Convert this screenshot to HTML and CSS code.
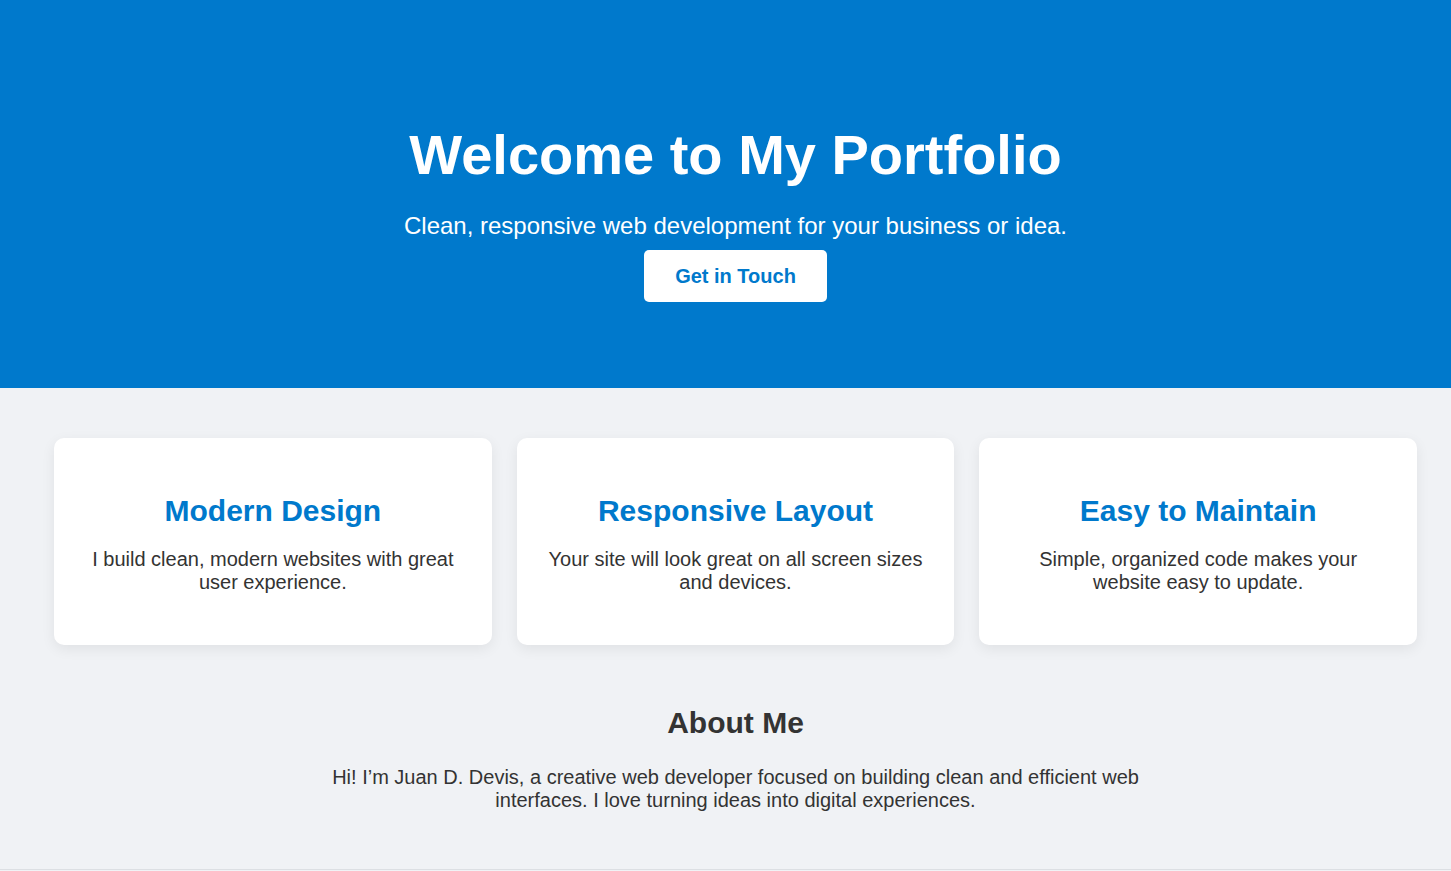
FILE: index.html
```html
<!DOCTYPE html>
<html lang="en">
<head>
<meta charset="utf-8">
<title>My Portfolio</title>
<link rel="stylesheet" href="styles.css">
</head>
<body>
<div class="page">
  <header class="hero">
    <h1 class="hero-title">Welcome to My Portfolio</h1>
    <p class="hero-sub">Clean, responsive web development for your business or idea.</p>
    <a class="hero-btn" href="#contact">Get in Touch</a>
  </header>

  <section class="features">
    <div class="card">
      <h2 class="card-title">Modern Design</h2>
      <p class="card-text">I build clean, modern websites with great user experience.</p>
    </div>
    <div class="card">
      <h2 class="card-title">Responsive Layout</h2>
      <p class="card-text">Your site will look great on all screen sizes and devices.</p>
    </div>
    <div class="card">
      <h2 class="card-title">Easy to Maintain</h2>
      <p class="card-text">Simple, organized code makes your website easy to update.</p>
    </div>
  </section>

  <section class="about">
    <h2 class="about-title">About Me</h2>
    <p class="about-text">Hi! I’m Juan D. Devis, a creative web developer focused on building clean and efficient web interfaces. I love turning ideas into digital experiences.</p>
  </section>

  <footer class="footer" id="contact"></footer>
</div>
</body>
</html>
```

FILE: styles.css
```css
html, body {
  margin: 0;
  padding: 0;
  overflow-x: hidden;
}

body {
  background: #f0f2f5;
  color: #333333;
  font-family: "Liberation Sans", Arial, sans-serif;
}

.page {
  width: 1471px;
}

.hero {
  background: #0079cc;
  color: #ffffff;
  text-align: center;
  padding: 122px 20px 86px;
}

.hero-title {
  font-size: 56px;
  font-weight: bold;
  margin: 0 0 25px;
}

.hero-sub {
  font-size: 24px;
  margin: 0 0 10px;
}

.hero-btn {
  display: inline-block;
  background: #ffffff;
  color: #0079cc;
  font-size: 20px;
  line-height: 22px;
  font-weight: bold;
  text-decoration: none;
  padding: 15px 31px;
  border-radius: 5px;
}

.features {
  display: grid;
  grid-template-columns: repeat(3, 1fr);
  gap: 25px;
  padding: 50px 54px 0;
}

.card {
  background: #ffffff;
  border-radius: 10px;
  box-shadow: 0 4px 14px rgba(0, 0, 0, 0.07);
  padding: 32px 30px;
  text-align: center;
}

.card-title {
  color: #0079cc;
  font-size: 30px;
  font-weight: bold;
  margin: 24px 0 20px;
}

.card-text {
  font-size: 20px;
  margin: 0 0 19px;
}

.about {
  padding: 61px 20px 57px;
  text-align: center;
}

.about-title {
  font-size: 30px;
  font-weight: bold;
  margin: 0 0 26px;
}

.about-text {
  font-size: 20px;
  max-width: 840px;
  margin: 0 auto;
}

.footer {
  border-top: 1px solid #dcdfe3;
  height: 60px;
}
```
